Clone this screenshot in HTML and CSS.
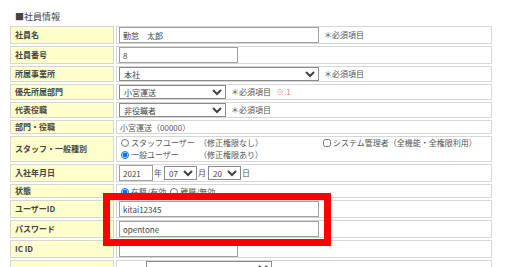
FILE: index.html
```html
<!DOCTYPE html>
<html lang="ja">
  <head>
    <meta charset="UTF-8" />
    <title>社員情報</title>
    <link rel="stylesheet" href="styles.css">
  </head>
  <body>
    <div class="page">
      <h2 class="section-title">■社員情報</h2>
      <table class="form-table">
        <tr>
          <th>社員名</th>
          <td><div class="field"><input class="w-long" type="text" value="勤怠　太郎"><span class="req">＊必須項目</span></div></td>
        </tr>
        <tr>
          <th>社員番号</th>
          <td><div class="field"><input class="w-mid" type="text" value="8"></div></td>
        </tr>
        <tr>
          <th>所属事業所</th>
          <td><div class="field"><select class="w-long"><option>本社</option></select><span class="req">＊必須項目</span></div></td>
        </tr>
        <tr>
          <th>優先所属部門</th>
          <td><div class="field"><select class="w-short"><option>小宮運送</option></select><span class="req">＊必須項目</span><span class="note">※.1</span></div></td>
        </tr>
        <tr>
          <th>代表役職</th>
          <td><div class="field"><select class="w-short"><option>非役職者</option></select><span class="req">＊必須項目</span></div></td>
        </tr>
        <tr class="text-row">
          <th>部門・役職</th>
          <td>小宮運送（00000）</td>
        </tr>
        <tr class="text-row">
          <th>スタッフ・一般種別</th>
          <td>
            <div class="type-line">
              <label><input type="radio" name="kind"><span class="type-name">スタッフユーザー</span>（修正権限なし）</label>
              <label class="admin"><input type="checkbox">システム管理者（全機能・全権限利用）</label>
            </div>
            <div class="type-line">
              <label><input type="radio" name="kind" checked><span class="type-name">一般ユーザー</span>（修正権限あり）</label>
            </div>
          </td>
        </tr>
        <tr>
          <th>入社年月日</th>
          <td>
            <div class="field date-field">
              <input class="w-year" type="text" value="2021"><span class="unit">年</span>
              <select class="w-day"><option>07</option></select><span class="unit">月</span>
              <select class="w-day"><option>20</option></select><span class="unit">日</span>
            </div>
          </td>
        </tr>
        <tr class="text-row">
          <th>状態</th>
          <td>
            <div class="field status-field">
              <label><input type="radio" name="status" checked>在籍/有効</label>
              <label><input type="radio" name="status">離職/無効</label>
            </div>
          </td>
        </tr>
        <tr>
          <th>ユーザーID</th>
          <td><div class="field"><input class="w-long" type="text" value="kitai12345"></div></td>
        </tr>
        <tr>
          <th>パスワード</th>
          <td><div class="field"><input class="w-long" type="text" value="opentone"></div></td>
        </tr>
        <tr>
          <th>IC ID</th>
          <td><div class="field"><input class="w-mid" type="text" value=""></div></td>
        </tr>
        <tr>
          <th></th>
          <td><div class="field"><select class="w-extra"><option></option></select></div></td>
        </tr>
      </table>
      <div class="highlight"></div>
    </div>
  </body>
</html>
```

FILE: styles.css
```css
* {
  margin: 0;
  padding: 0;
  box-sizing: border-box;
}

body {
  font-family: "Noto Sans CJK JP", "Noto Sans", sans-serif;
  font-size: 8px;
  color: #555;
  background-color: #fff;
  overflow: hidden;
}

.page {
  position: relative;
  padding: 9px 10px 0 10px;
}

.section-title {
  font-size: 9px;
  font-weight: normal;
  color: #444;
  line-height: 15px;
  padding-left: 5px;
}

.form-table {
  width: 486px;
  border-collapse: separate;
  border-spacing: 2px;
  margin-left: -2px;
}

.form-table th,
.form-table td {
  border: 1px solid #d6d6d6;
  padding: 0 2px;
  line-height: 12px;
  vertical-align: middle;
  text-align: left;
  white-space: nowrap;
}

.form-table th {
  width: 104px;
  background-color: #ffffcc;
  color: #444;
  font-weight: bold;
  padding-left: 4px;
}

.text-row td {
  padding-left: 3px;
  line-height: 11px;
}

.field {
  display: flex;
  align-items: center;
}

input[type="text"] {
  height: 16px;
  border: 1px solid #a0a0a0;
  font-family: inherit;
  font-size: 8px;
  color: #444;
  padding: 0 3px;
}

select {
  height: 14px;
  border: 1px solid #8a8a8a;
  border-radius: 0;
  font-family: inherit;
  font-size: 8px;
  color: #444;
  padding: 0;
  background-color: #fff;
}

.w-long {
  width: 200px;
}

.w-mid {
  width: 119px;
}

.w-short {
  width: 107px;
}

.w-year {
  width: 34px;
}

.w-day {
  width: 33px;
}

.w-extra {
  width: 126px;
  margin-left: 27px;
}

.req {
  margin-left: 5px;
}

.note {
  margin-left: 5px;
  color: #f08070;
}

.date-field .unit {
  margin: 0 2px 0 1px;
}

.type-line {
  display: flex;
  line-height: 12px;
}

.type-name {
  display: inline-block;
  width: 68px;
}

.admin {
  margin-left: 59px;
}

.status-field {
  gap: 3px;
}

input[type="radio"],
input[type="checkbox"] {
  width: 8px;
  height: 8px;
  margin: 0 2px 0 1px;
  vertical-align: -1px;
}

.highlight {
  position: absolute;
  left: 103px;
  top: 193px;
  width: 228px;
  height: 53px;
  border: 7px solid #ff0000;
}
```
